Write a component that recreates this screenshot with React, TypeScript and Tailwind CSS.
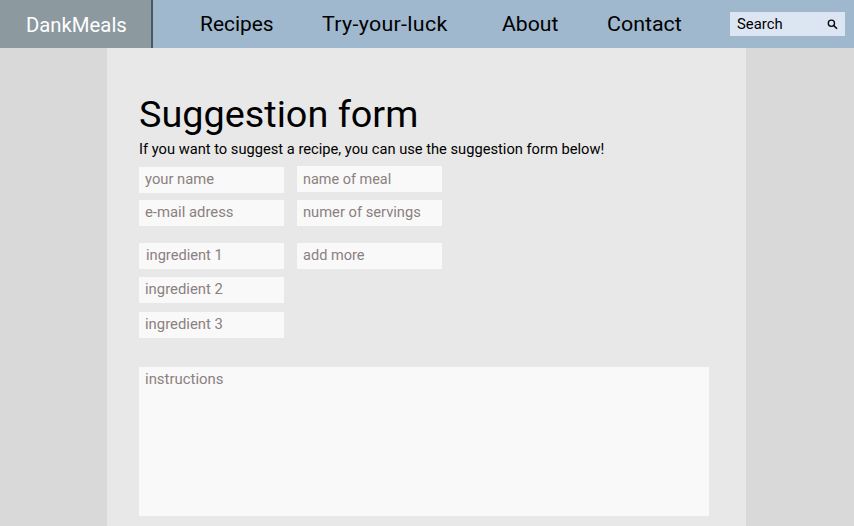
import React from "react";

type FieldProps = { label: string; className?: string; text: string };

function Field({ label, className = "", text }: FieldProps) {
  return (
    <div className={`h-[26px] w-[145px] bg-[#f9f9f9] text-sm whitespace-nowrap text-[#8b8080] ${className}`}>
      <span className={`inline-block origin-left ${text}`}>{label}</span>
    </div>
  );
}

function Header() {
  return (
    <header className="flex h-12 bg-[#9fb8ce] text-xl leading-[48px] whitespace-nowrap text-black">
      <div className="w-[153px] shrink-0 border-r-2 border-[#4b5862] bg-[#8c999f] pt-px pl-[25.5px] text-white">
        <span className="inline-block origin-left scale-x-[1.015]">DankMeals</span>
      </div>
      <nav className="flex w-[577px] shrink-0">
        <a className="ml-[46.5px] w-[122.5px]"><span className="inline-block origin-left scale-x-[1.045]">Recipes</span></a>
        <a className="w-[180px]"><span className="inline-block origin-left scale-x-[1.07] tracking-[0.28px]">Try-your-luck</span></a>
        <a className="w-[104.5px]"><span className="inline-block origin-left scale-x-[1.06]">About</span></a>
        <a><span className="inline-block origin-left scale-x-[1.07]">Contact</span></a>
      </nav>
      <div className="mt-3 flex h-6 w-[115px] items-center justify-between bg-[#dce5f2] pr-[7px] pl-[7px] text-sm leading-6">
        <span className="inline-block origin-left scale-x-[1.06]">Search</span>
        <svg className="mt-px h-[11px] w-[11px]" viewBox="0 0 11 11" fill="none" stroke="#080808" strokeWidth="1.35">
          <circle cx="4.4" cy="4.2" r="3.1" />
          <path d="M6.7 6.5 L10 9.8" strokeWidth="1.6" />
        </svg>
      </div>
    </header>
  );
}

export default function App() {
  return (
    <div className="h-[526px] w-[854px] overflow-hidden bg-[#d9d9d9] font-['Roboto',sans-serif]">
      <Header />
      <main className="ml-[107px] h-[478px] w-[639px] bg-[#e8e8e8] pt-[44px] pl-8">
        <h1 className="h-[46px] text-4xl leading-[46px] whitespace-nowrap text-black">
          <span className="inline-block origin-left scale-x-[1.05]">Suggestion form</span>
        </h1>
        <p className="h-7 text-sm leading-[23px] whitespace-nowrap text-black">
          <span className="inline-block origin-left scale-x-[1.048]">
            If you want to suggest a recipe, you can use the suggestion form below!
          </span>
        </p>
        <div className="flex h-[201px] gap-[13px]">
          <div>
            <Field label="your name" className="mt-px pl-1.5 leading-[25px]" text="scale-x-[1.055]" />
            <Field label="e-mail adress" className="mt-[7px] pl-1.5 leading-[25px]" text="scale-x-[1.06]" />
            <Field label="ingredient 1" className="mt-[17px] pl-[7px] leading-[25px]" text="scale-x-[1.045]" />
            <Field label="ingredient 2" className="mt-2 pl-1.5 leading-[25px]" text="scale-x-[1.06]" />
            <Field label="ingredient 3" className="mt-[9px] pl-1.5 leading-[25px]" text="scale-x-[1.06]" />
          </div>
          <div>
            <Field label="name of meal" className="pl-1.5 leading-[27px]" text="scale-x-[1.03]" />
            <Field label="numer of servings" className="mt-2 pl-1.5 leading-[25px]" text="scale-x-[1.05]" />
            <Field label="add more" className="mt-[17px] pl-1.5 leading-[25px]" text="scale-x-[1.04]" />
          </div>
        </div>
        <div className="h-[149px] w-[570px] bg-[#f9f9f9] pl-1.5 text-sm leading-[25px] text-[#8b8080]">
          <span className="inline-block origin-left scale-x-[1.065]">instructions</span>
        </div>
      </main>
    </div>
  );
}
